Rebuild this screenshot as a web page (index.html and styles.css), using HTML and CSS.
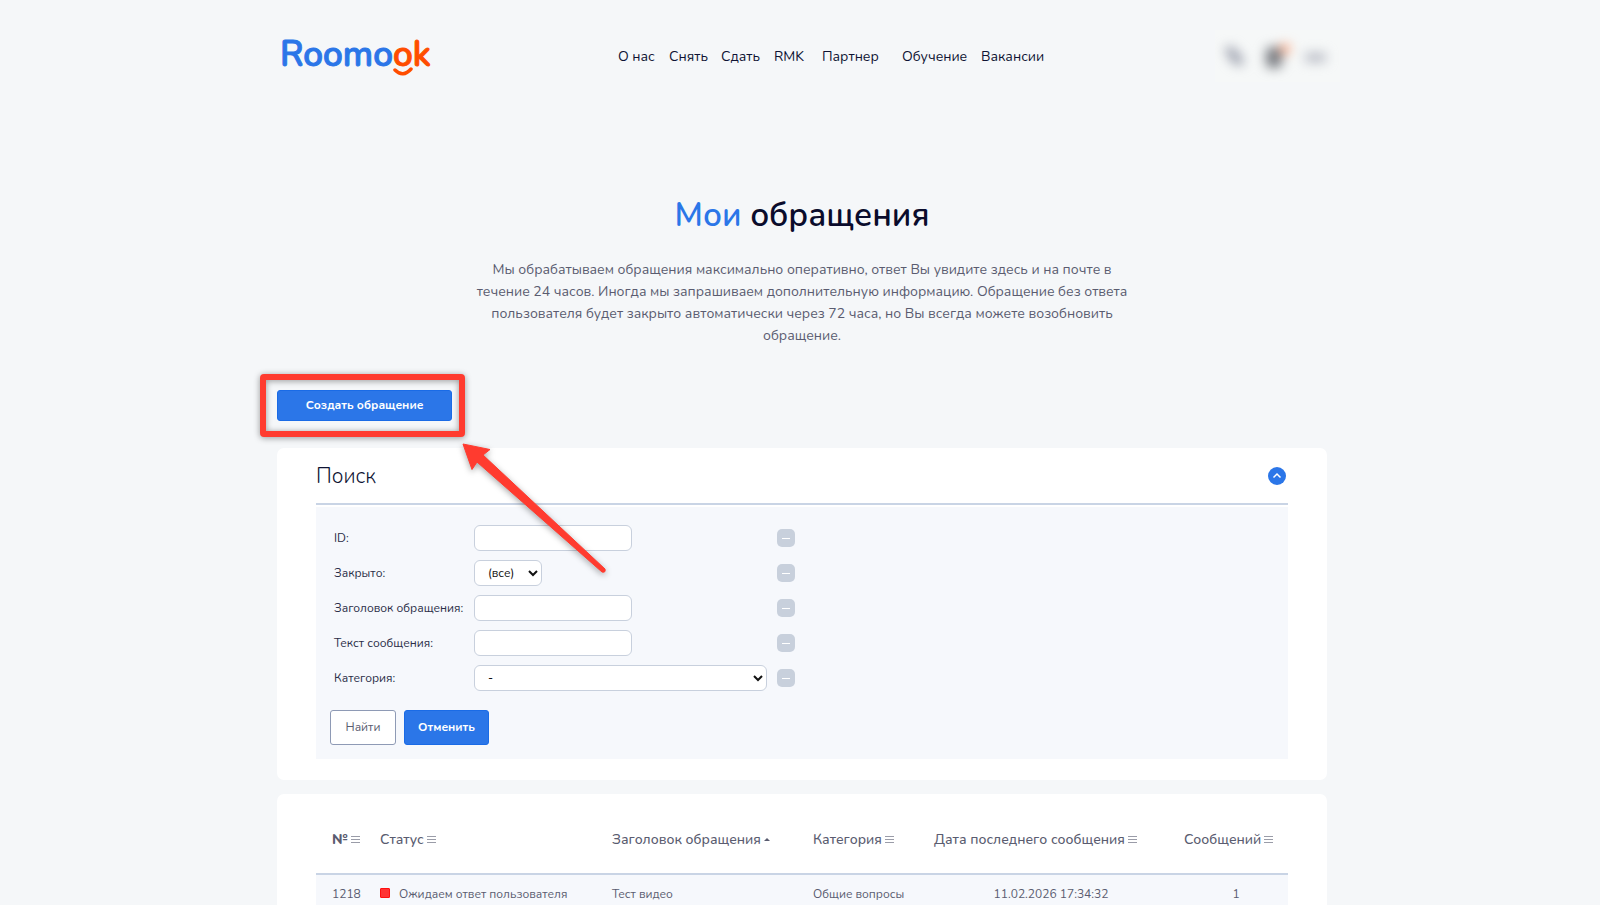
FILE: index.html
```html
<!DOCTYPE html>
<html lang="ru">
<head>
  <meta charset="UTF-8">
  <meta name="viewport" content="width=device-width, initial-scale=1.0">
  <title>Мои обращения</title>
  <link rel="stylesheet" href="styles.css">
</head>
<body>
  <div class="container">
    <header class="header">
      <a class="logo" href="#">Roomo<span class="logo-ok">ok
        <svg class="logo-smile" width="20" height="10" viewBox="0 0 20 10"><path d="M2 3Q10 11 18 2" fill="none" stroke="#ff4d00" stroke-width="3.500" stroke-linecap="round"/></svg></span></a>
      <nav class="nav">
        <a href="#">О нас</a>
        <a href="#">Снять</a>
        <a href="#">Сдать</a>
        <a href="#">RMK</a>
        <a href="#">Партнер</a>
        <a href="#">Обучение</a>
        <a href="#">Вакансии</a>
      </nav>
      <div class="user-tools">
        <svg width="125" height="52" viewBox="0 0 125 52">
          <g class="blurred">
            <path d="M9 19l8-3 12 14-3 6-8-3z" fill="#999dab"/>
            <rect x="51" y="17" width="16" height="21" rx="5" fill="#777a80"/>
            <circle cx="70" cy="19" r="5" fill="#ff9d72"/>
            <rect x="90" y="23" width="21" height="9" rx="3" fill="#b5b8c2"/>
          </g>
        </svg>
      </div>
    </header>

    <main>
      <h1 class="title"><span>Мои</span> обращения</h1>
      <p class="intro">Мы обрабатываем обращения максимально оперативно, ответ Вы увидите здесь и на почте в течение 24 часов. Иногда мы запрашиваем дополнительную информацию. Обращение без ответа пользователя будет закрыто автоматически через 72 часа, но Вы всегда можете возобновить обращение.</p>

      <div class="create">
        <button class="btn btn-primary btn-create" type="button">Создать обращение</button>
        <div class="highlight"></div>
        <svg class="arrow" width="160" height="144" viewBox="0 0 160 144">
          <path d="M6 4L33 9.500L26 15L148 129Q149 133 145 132L20 22L15 29.500Z" fill="#ff3b2f" stroke="#ff3b2f" stroke-linejoin="round"/>
        </svg>
      </div>

      <!-- Search -->
      <section class="card search">
        <div class="search-head">
          <h2>Поиск</h2>
          <button class="toggle" type="button" aria-label="Свернуть">
            <svg width="18" height="18" viewBox="0 0 18 18"><path d="M5.500 10.500L9 7L12.500 10.500" fill="none" stroke="#fff" stroke-width="1.500"/></svg>
          </button>
        </div>
        <form class="search-form">
          <div class="row">
            <label for="f-id">ID:</label>
            <div class="field"><input type="text" id="f-id"></div>
            <button class="minus" type="button" aria-label="Убрать"></button>
          </div>
          <div class="row">
            <label for="f-closed">Закрыто:</label>
            <div class="field"><select class="short" id="f-closed"><option>(все)</option></select></div>
            <button class="minus" type="button" aria-label="Убрать"></button>
          </div>
          <div class="row">
            <label for="f-title">Заголовок обращения:</label>
            <div class="field"><input type="text" id="f-title"></div>
            <button class="minus" type="button" aria-label="Убрать"></button>
          </div>
          <div class="row">
            <label for="f-text">Текст сообщения:</label>
            <div class="field"><input type="text" id="f-text"></div>
            <button class="minus" type="button" aria-label="Убрать"></button>
          </div>
          <div class="row">
            <label for="f-category">Категория:</label>
            <div class="field"><select id="f-category"><option>-</option></select></div>
            <button class="minus" type="button" aria-label="Убрать"></button>
          </div>
          <div class="actions">
            <button class="btn btn-outline" type="button">Найти</button>
            <button class="btn btn-primary" type="button">Отменить</button>
          </div>
        </form>
      </section>

      <!-- Tickets -->
      <section class="card tickets">
        <table>
          <colgroup>
            <col class="c-num"><col class="c-status"><col class="c-title"><col class="c-cat"><col class="c-date"><col>
          </colgroup>
          <thead>
            <tr>
              <th><b>№</b><i class="sort"></i></th>
              <th>Статус<i class="sort"></i></th>
              <th>Заголовок обращения<i class="sort-up"></i></th>
              <th>Категория<i class="sort"></i></th>
              <th>Дата последнего сообщения<i class="sort"></i></th>
              <th>Сообщений<i class="sort"></i></th>
            </tr>
          </thead>
          <tbody>
            <tr>
              <td>1218</td>
              <td><span class="lamp"></span>Ожидаем ответ пользователя</td>
              <td>Тест видео</td>
              <td>Общие вопросы</td>
              <td class="center">11.02.2026 17:34:32</td>
              <td class="center">1</td>
            </tr>
          </tbody>
        </table>
      </section>
    </main>
  </div>
</body>
</html>
```
FILE: styles.css
```css
* {
  margin: 0;
  padding: 0;
  box-sizing: border-box;
}

body {
  font-family: Nunito, "Open Sans", "Noto Sans", sans-serif;
  font-size: 12px;
  color: #5a5c70;
  background-color: #f5f7f9;
  padding-left: 4px;
  overflow-x: hidden;
}

body::-webkit-scrollbar {
  display: none;
}

a {
  color: inherit;
  text-decoration: none;
}

button,
input,
select {
  font: inherit;
}

.container {
  max-width: 1050px;
  margin: 0 auto;
}

/* Header */
.header {
  display: grid;
  grid-template-columns: 341px 1fr 112px;
  align-items: center;
  height: 112px;
}

.logo {
  padding-left: 3px;
  padding-bottom: 2px;
  font-size: 35px;
  line-height: 48px;
  font-weight: 600;
  color: #2b76e8;
  -webkit-text-stroke: 1px currentColor;
}

.logo-ok {
  position: relative;
  color: #ff4d00;
}

.logo-smile {
  position: absolute;
  left: 0;
  bottom: 1px;
}

.nav {
  display: grid;
  grid-template-columns: 51px 52px 53px 48px 80px 79px 70px;
  font-size: 14px;
  color: #0e1333;
  white-space: nowrap;
}

.user-tools svg {
  display: block;
  background-color: #f6f8f8;
}

.blurred {
  filter: blur(6px);
}

/* Intro */
.title {
  margin-top: 80px;
  font-size: 33px;
  line-height: 48px;
  font-weight: 600;
  text-align: center;
  color: #0a0c2c;
}

.title span {
  color: #2b76e8;
}

.intro {
  max-width: 660px;
  margin: 19px auto 43px;
  font-size: 14px;
  line-height: 22px;
  text-align: center;
}

/* Buttons */
.btn {
  height: 35px;
  padding-bottom: 1px;
  border-radius: 3px;
  cursor: pointer;
}

.btn-primary {
  width: 85px;
  border: 1px solid #1a6be6;
  background-color: #2b76e8;
  color: #fff;
  font-weight: 700;
}

.btn-outline {
  width: 66px;
  border: 1px solid #8e9ab5;
  background-color: #fff;
  color: #5a5c70;
}

.btn-create {
  display: block;
  width: 175px;
  height: 31px;
}

.create {
  position: relative;
  margin-bottom: 27px;
}

/* Callout over the create button */
.highlight {
  position: absolute;
  left: -17px;
  top: -16px;
  width: 205px;
  height: 63px;
  border: 6px solid #ff3b2f;
  border-radius: 4px;
  filter: drop-shadow(0 1px 3px rgba(0, 0, 0, 0.4));
  pointer-events: none;
}

.arrow {
  position: absolute;
  left: 180px;
  top: 50px;
  filter: drop-shadow(0 2px 3px rgba(0, 0, 0, 0.35));
  pointer-events: none;
}

/* Cards */
.card {
  margin-bottom: 14px;
  padding: 0 39px;
  border-radius: 7px;
  background-color: #fff;
}

.search {
  padding-bottom: 21px;
}

.search-head {
  display: flex;
  justify-content: space-between;
  align-items: center;
  height: 57px;
  border-bottom: 2px solid #c9d4e5;
}

.search-head h2 {
  font-size: 21px;
  line-height: 28px;
  font-weight: 300;
  color: #0e1333;
}

.toggle {
  width: 18px;
  height: 18px;
  margin-right: 2px;
  border: none;
  border-radius: 50%;
  background-color: #2b76e8;
}

.toggle svg {
  display: block;
}

.search-form {
  margin-top: 2px;
  padding: 18px 14px 14px;
  background-color: #f6f8fc;
}

.row {
  display: grid;
  grid-template-columns: 140px 303px 18px;
  align-items: center;
  height: 26px;
  margin-bottom: 9px;
  padding-left: 4px;
}

.row label {
  color: #2b2e48;
  white-space: nowrap;
}

.field {
  display: flex;
}

.row input,
.row select {
  height: 26px;
  border: 1px solid #c8d0dd;
  border-radius: 6px;
  background-color: #fff;
  color: #111;
}

.row input {
  width: 158px;
  padding: 0 10px;
}

.row select {
  width: 293px;
  padding-left: 9px;
}

.row select.short {
  width: 68px;
}

.minus {
  display: grid;
  place-items: center;
  width: 18px;
  height: 18px;
  border: none;
  border-radius: 5px;
  background-color: #c8d0dc;
}

.minus::before {
  content: "";
  width: 8px;
  height: 1px;
  background-color: #fff;
}

.actions {
  display: flex;
  gap: 8px;
  margin-top: 19px;
}

/* Table */
.tickets table {
  width: 100%;
  table-layout: fixed;
  border-collapse: collapse;
}

.c-num { width: 48px; }
.c-status { width: 232px; }
.c-title { width: 201px; }
.c-cat { width: 121px; }
.c-date { width: 250px; }

.tickets th {
  height: 80px;
  padding: 12px 0 0 16px;
  border-bottom: 2px solid #c9d4e5;
  font-size: 14px;
  font-weight: 500;
  text-align: left;
  white-space: nowrap;
}

.tickets th b {
  font-weight: 800;
}

.tickets td {
  height: 38px;
  padding-left: 16px;
  background-color: #f6f8fc;
  white-space: nowrap;
}

.tickets td.center {
  text-align: center;
}

.sort,
.sort-up {
  display: inline-block;
  margin-left: 3px;
}

.sort {
  width: 9px;
  height: 7px;
  margin-bottom: 1px;
  border-top: 1px solid #9a9ca8;
  border-bottom: 1px solid #9a9ca8;
  background: linear-gradient(#9a9ca8, #9a9ca8) center / 9px 1px no-repeat;
}

.sort-up {
  margin-bottom: 3px;
  border: 3px solid transparent;
  border-top: none;
  border-bottom-color: #5a5c70;
}

.lamp {
  display: inline-block;
  width: 10px;
  height: 10px;
  margin-right: 9px;
  border: 1px solid #ff0f0f;
  border-radius: 1px;
  background-color: #ff3333;
}
```
